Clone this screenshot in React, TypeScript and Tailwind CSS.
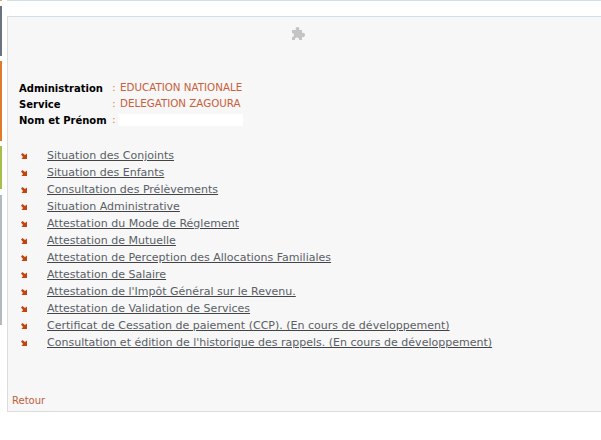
const links = [
  "Situation des Conjoints",
  "Situation des Enfants",
  "Consultation des Prélèvements",
  "Situation Administrative",
  "Attestation du Mode de Réglement",
  "Attestation de Mutuelle",
  "Attestation de Perception des Allocations Familiales",
  "Attestation de Salaire",
  "Attestation de l'Impôt Général sur le Revenu.",
  "Attestation de Validation de Services",
  "Certificat de Cessation de paiement (CCP). (En cours de développement)",
  "Consultation et édition de l'historique des rappels. (En cours de développement)",
];

function Bullet() {
  return (
    <svg width="6" height="6" viewBox="0 0 6 6" className="mb-[2px] block">
      <path d="M6 0.5 V6 H0.5 L2 4 L0 1.5 L1.5 0 L4 2 Z" fill="#c2450f" />
    </svg>
  );
}

function Puzzle() {
  return (
    <svg width="14" height="14" viewBox="0 0 14 14" className="block">
      <path d="M1 3 H5 C4 1 5 0 6.5 0 C8 0 9 1 8 3 H11 V6 C13 5.5 14 6.5 14 8 C14 9.5 13 10.5 11 10 V13 H8 C8.5 11.5 7.5 10.5 6 10.5 C4.5 10.5 3.5 11.5 4 13 H1 V10 C2.5 10 3 9 3 8 C3 7 2.5 6 1 6 Z" fill="#c4c4c4" />
    </svg>
  );
}

export default function App() {
  return (
    <div className="flex h-[440px] w-[601px] overflow-hidden bg-white font-['DejaVu_Sans',sans-serif] text-[11.03px]">
      <div className="flex w-[7px] flex-col">
        <div className="h-[1px] w-[2px] bg-[#e9a35c]" />
        <div className="mt-[5px] h-[50px] w-[2px] bg-[#6b7280]" />
        <div className="mt-[5px] h-[80px] w-[2px] bg-[#e07b2c]" />
        <div className="mt-[5px] h-[43px] w-[2px] border-y border-r-2 border-[#a3c14a]" />
        <div className="mt-[6px] h-[130px] w-[2px] border-r-2 border-[#b4b9bd]" />
      </div>
      <div className="flex w-[594px] flex-col">
        <div className="h-[1px] bg-[#d5dde6]" />
        <div className="mt-[15px] flex h-[396px] flex-col border-t border-b border-l border-t-[#d5dde6] border-b-[#dcdcdc] border-l-[#dcdcdc] bg-[#f7f7f7]">
          <div className="flex justify-center pt-[10px] pr-[13px]">
            <Puzzle />
          </div>
          <div className="mt-[39px] flex flex-col pl-[11px]">
            {[
              ["Administration", "EDUCATION NATIONALE"],
              ["Service", "DELEGATION ZAGOURA"],
            ].map(([k, v]) => (
              <div key={k} className="flex h-[16px] items-center">
                <span className="w-[93px] text-[10px] font-bold whitespace-nowrap text-black">{k}</span>
                <span className="w-[8px] text-[#e08a3c]">:</span>
                <span className="text-[10.3px] text-[#c8603a]">{v}</span>
              </div>
            ))}
            <div className="flex h-[16px] items-center">
              <span className="w-[93px] text-[10px] font-bold whitespace-nowrap text-black">Nom et Prénom</span>
              <span className="w-[6px] text-[#e08a3c]">:</span>
              <span className="h-[12px] w-[125px] bg-white" />
            </div>
          </div>
          <ul className="mt-[20px] flex flex-col pl-[13px]">
            {links.map((l) => (
              <li key={l} className="flex h-[17px] items-center">
                <span className="w-[26px]"><Bullet /></span>
                <a className="whitespace-nowrap text-[#5a5f66] underline decoration-[#444444]">{l}</a>
              </li>
            ))}
          </ul>
          <div className="mt-auto pb-[3px] pl-[4px] text-[10px] text-[#c0603a]">Retour</div>
        </div>
      </div>
    </div>
  );
}
